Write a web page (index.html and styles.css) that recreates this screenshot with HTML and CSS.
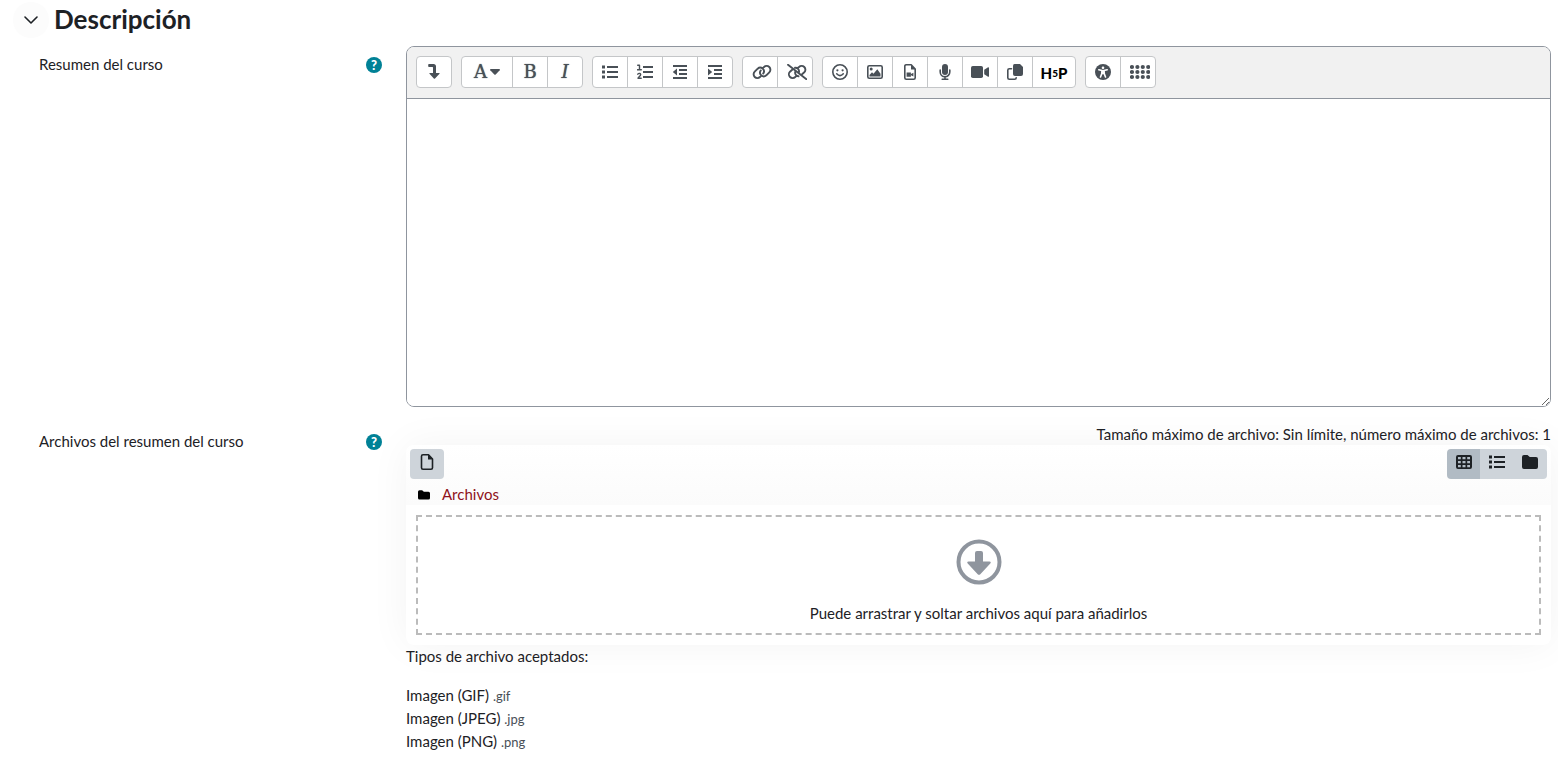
FILE: index.html
```html
<!DOCTYPE html>
<html lang="es">
<head>
<meta charset="utf-8">
<title>Descripción</title>
<link rel="stylesheet" href="styles.css">
</head>
<body>
<main class="section">
  <header class="section-head">
    <button class="toggle" type="button" aria-label="Contraer" aria-expanded="true">
      <svg class="icon chevron" viewBox="0 0 14 14"><path class="line" d="M1 4 7 10l6-6"/></svg>
    </button>
    <h3 class="title">Descripción</h3>
  </header>

  <div class="row">
    <div class="label-cell">
      <label for="summary">Resumen del curso</label>
      <button class="help" type="button" aria-label="Ayuda sobre Resumen del curso">?</button>
    </div>
    <div class="editor">
      <div class="toolbar" role="toolbar">
        <div class="group">
          <button class="tool" type="button" aria-label="Mostrar más botones"><svg class="icon" viewBox="0 0 16 16"><path d="M3 0h4.500Q10 0 10 2.500V9h3.200q.8.100.3.800L9 14.600q-.6.500-1.200 0L3.500 9.800Q3 9.100 3.800 9H7V3.500Q7 3 6.500 3H3q-.8 0-.8-.8V.8Q2.200 0 3 0z"/></svg></button>
        </div>
        <div class="group">
          <button class="tool wide" type="button" aria-label="Estilos de párrafo"><span class="glyph">A</span><svg class="caret" viewBox="0 0 10 6"><path d="M.8 0h8.400q1.200.2.500 1.200L5.700 5.500q-.7.700-1.400 0L.3 1.200Q-.4.200.8 0z"/></svg></button>
          <button class="tool" type="button" aria-label="Negrita"><span class="glyph">B</span></button>
          <button class="tool" type="button" aria-label="Cursiva"><span class="glyph slanted">I</span></button>
        </div>
        <div class="group">
          <button class="tool" type="button" aria-label="Lista desordenada"><svg class="icon" viewBox="0 0 16 16"><path d="M0 1.500h3v3H0zM0 6.500h3v3H0zM0 11.500h3v3H0zM5 2h11v2H5zM5 7h11v2H5zM5 12h11v2H5z"/></svg></button>
          <button class="tool" type="button" aria-label="Lista ordenada"><svg class="icon" viewBox="0 0 16 16"><path d="M6 2h10v2H6zM6 7h10v2H6zM6 12h10v2H6z"/><path class="line fine" d="M.7 1.300h1.800v4.200M.3 5.800h4M.8 10.200c1-1.400 3.200-.8 2.800.6C3.300 12 2 12.600 1 14.200h3.200"/></svg></button>
          <button class="tool" type="button" aria-label="Reducir sangría"><svg class="icon" viewBox="0 0 16 16"><path d="M1 1h14v2H1zM7 5h8v2H7zM7 9h8v2H7zM1 13h14v2H1zM5 4.500v7L.8 8z"/></svg></button>
          <button class="tool" type="button" aria-label="Aumentar sangría"><svg class="icon" viewBox="0 0 16 16"><path d="M1 1h14v2H1zM7 5h8v2H7zM7 9h8v2H7zM1 13h14v2H1zM1 4.500v7L5.200 8z"/></svg></button>
        </div>
        <div class="group">
          <button class="tool shifted" type="button" aria-label="Enlace"><svg class="icon large" viewBox="0 0 20 16"><path class="line bold" d="M11.300 3.600 12 3a3.700 3.700 0 0 1 5.300 5.300l-3 3a3.700 3.700 0 0 1-5.500-4.900M8.700 12.400l-.7.600a3.700 3.700 0 0 1-5.300-5.300l3-3a3.700 3.700 0 0 1 5.500 4.900"/></svg></button>
          <button class="tool shifted" type="button" aria-label="Quitar enlace"><svg class="icon large" viewBox="0 0 20 16"><path class="line bold" d="M1 .8 19.500 15.300M6 5 3 7.700a3.700 3.700 0 0 0 5.300 5.300l.7-.6M8.300 7.500a3.700 3.700 0 0 0 3.200 4.800M8 3.700a3.700 3.700 0 0 1 4 4.300M11 3.800l1-.8a3.700 3.700 0 0 1 5.300 5.300L15.300 10"/></svg></button>
        </div>
        <div class="group">
          <button class="tool" type="button" aria-label="Emoticono"><svg class="icon" viewBox="0 0 16 16"><circle class="line" cx="8" cy="8" r="7.200"/><circle cx="5.400" cy="6.300" r="1.100"/><circle cx="10.600" cy="6.300" r="1.100"/><path class="line" d="M4.700 9.800q3.300 3.600 6.600 0"/></svg></button>
          <button class="tool" type="button" aria-label="Imagen"><svg class="icon" viewBox="0 0 16 16"><rect class="line" x=".8" y="1.800" width="14.400" height="12.400" rx="1.500"/><circle cx="4.200" cy="5" r="1.500"/><path d="M2.500 12.500V11L5 8.300l1.500 1.500 3.800-4.600 3.200 4.600v2.700z"/></svg></button>
          <button class="tool" type="button" aria-label="Archivo multimedia"><svg class="icon" viewBox="0 0 16 16"><path class="line" d="M3.800.8h5.400L13.200 5v8.700q0 1.500-1.500 1.500H4.300q-1.500 0-1.500-1.500V2.300Q2.800.8 4.300.8"/><path d="M9 .8V5.500h4.500zM4.600 8.500h4.300v4.200H4.600zM9 10l2.400-1.300v3.800L9 11.300z"/></svg></button>
          <button class="tool" type="button" aria-label="Grabar audio"><svg class="icon" viewBox="0 0 16 16"><rect x="5" y="0" width="6" height="11" rx="3"/><path class="line" d="M3.200 6v2a4.800 4.800 0 0 0 9.600 0V6M8 12.500v2.700M5.200 15.200h5.600"/></svg></button>
          <button class="tool" type="button" aria-label="Grabar vídeo"><svg class="icon video" viewBox="0 0 18 16"><rect x="0" y="2" width="12" height="12" rx="1.800"/><path d="m13.200 5.700 3.500-2.300q1.300-.6 1.300.7v7.800q0 1.300-1.300.7l-3.500-2.300z"/></svg></button>
          <button class="tool" type="button" aria-label="Gestionar archivos"><svg class="icon" viewBox="0 0 16 16"><path d="M7.500 0H13l3 3v7q0 2-2 2H8q-2 0-2-2V2q0-2 1.500-2z"/><path class="line" d="M4.500 4.800H2.300Q.8 4.800.8 6.300v7.400q0 1.500 1.500 1.500h5.400q1.500 0 1.500-1.500"/></svg></button>
          <button class="tool h5p" type="button" aria-label="H5P"><span>H</span><span class="five">5</span><span>P</span></button>
        </div>
        <div class="group">
          <button class="tool" type="button" aria-label="Accesibilidad"><svg class="icon" viewBox="0 0 16 16"><circle cx="8" cy="8" r="8"/><circle class="white" cx="8" cy="3.800" r="1.300"/><path class="white-line" d="m3.800 5.800 4.200 1 4.200-1M8 7v2.500M6.800 7v2.500L5.500 13M9.200 7v2.500l1.300 3.500"/></svg></button>
          <button class="tool shifted" type="button" aria-label="Lector de pantalla"><svg class="icon large" viewBox="0 0 20 16"><path class="dots" d="M2 3h16.500M2 8h16.500M2 13h16.500"/></svg></button>
        </div>
      </div>
      <textarea id="summary" class="text"></textarea>
    </div>
  </div>

  <div class="row files-row">
    <div class="label-cell">
      <label for="add-file">Archivos del resumen del curso</label>
      <button class="help" type="button" aria-label="Ayuda sobre Archivos del resumen del curso">?</button>
    </div>
    <div class="files">
      <p class="limits">Tamaño máximo de archivo: Sin límite, número máximo de archivos: 1</p>
      <div class="manager">
        <div class="manager-head">
          <div class="manager-bar">
            <button id="add-file" class="view add" type="button" aria-label="Agregar"><svg class="icon" viewBox="0 0 16 16"><path class="line" d="M4 .8h5.500L13.500 5v8.700q0 1.500-1.500 1.500H4q-1.500 0-1.500-1.500V2.300Q2.500.8 4 .8z"/><path d="M9 .5V5.500h5z"/></svg></button>
            <div class="views">
              <button class="view active" type="button" aria-label="Iconos"><svg class="icon" viewBox="0 0 16 16"><path fill-rule="evenodd" d="M2 1h12q2 0 2 2v10q0 2-2 2H2q-2 0-2-2V3q0-2 2-2zM2 3v2.300h2.800V3zM6.500 3v2.300h3V3zM11.200 3v2.300H14V3zM2 7v2.300h2.800V7zM6.500 7v2.300h3V7zM11.200 7v2.300H14V7zM2 11v2.300h2.800V11zM6.500 11v2.300h3V11zM11.200 11v2.300H14V11z"/></svg></button>
              <button class="view" type="button" aria-label="Lista"><svg class="icon" viewBox="0 0 16 16"><path d="M0 1.500h3v3H0zM0 6.500h3v3H0zM0 11.500h3v3H0zM5 2h11v2H5zM5 7h11v2H5zM5 12h11v2H5z"/></svg></button>
              <button class="view last" type="button" aria-label="Árbol"><svg class="icon" viewBox="0 0 16 16"><path d="M2 1h3.500l2.300 2H14q2 0 2 2v8q0 2-2 2H2q-2 0-2-2V3q0-2 2-2z"/></svg></button>
            </div>
          </div>
          <nav class="path">
            <svg class="folder" viewBox="0 0 16 16"><path d="M2 1.500h3.500l2.300 2H14q2 0 2 2V12q0 2-2 2H2q-2 0-2-2V3.500q0-2 2-2z"/></svg>
            <a class="crumb" href="#">Archivos</a>
          </nav>
        </div>
        <div class="drop">
          <svg class="arrow" viewBox="0 0 46 46"><circle cx="23" cy="23" r="20.500"/><path d="M19 14q0-2 2-2h4q2 0 2 2v8.500h6.500q2 .3.800 1.900L24.300 35.200q-1.300 1.100-2.600 0L11.700 24.400q-1.200-1.600.8-1.900H19z"/></svg>
          <p class="drop-text">Puede arrastrar y soltar archivos aquí para añadirlos</p>
        </div>
      </div>
      <p class="types-title">Tipos de archivo aceptados:</p>
      <ul class="types">
        <li>Imagen (GIF) <small>.gif</small></li>
        <li>Imagen (JPEG) <small>.jpg</small></li>
        <li>Imagen (PNG) <small>.png</small></li>
      </ul>
    </div>
  </div>
</main>
</body>
</html>
```
FILE: styles.css
```css
* { box-sizing: border-box; }
body {
  margin: 0;
  background: #fff;
  color: #1d2125;
  font: 15px/23px Lato, sans-serif;
}
button { font: inherit; color: inherit; border: 0; padding: 0; background: none; cursor: pointer; }
p, ul, h3 { margin: 0; padding: 0; }
.section { padding: 2px 7px 16px 13px; overflow: hidden; }
.section-head { display: flex; align-items: center; gap: 5px; height: 36px; }
.toggle {
  display: flex; align-items: center; justify-content: center;
  width: 36px; height: 36px; border-radius: 50%; background: #fcfcfc;
}
.title { font-size: 26px; line-height: 32px; font-weight: 700; padding-bottom: 2px; }
.row { display: grid; grid-template-columns: 344px minmax(0, 1fr); column-gap: 23px; padding: 8px 0 0 26px; }
.files-row { padding-top: 16px; }
.label-cell { display: flex; justify-content: space-between; align-items: center; height: 23px; margin-top: 7px; }
.help {
  display: flex; align-items: center; justify-content: center;
  width: 16px; height: 16px; margin-right: 1px; border-radius: 50%;
  background: #008196; color: #fff; font-size: 13px; line-height: 16px; font-weight: 900;
}
.icon { display: block; width: 16px; height: 16px; fill: currentColor; }
.chevron { width: 14px; height: 14px; }
.large { width: 20px; }
.video { width: 18px; }
.line { fill: none; stroke: currentColor; stroke-width: 1.6; stroke-linecap: round; stroke-linejoin: round; }
.bold { stroke-width: 1.9; }
.fine { stroke-width: 1.4; }
.white { fill: #fff; }
.white-line { fill: none; stroke: #fff; stroke-width: 1.6; stroke-linecap: round; }
.dots { fill: none; stroke: currentColor; stroke-width: 4.200; stroke-linecap: round; stroke-dasharray: 0 5.4; }

.editor { border: 1px solid #8f959e; border-radius: 8px; overflow: hidden; }
.toolbar {
  display: flex; flex-wrap: wrap; gap: 9px; padding: 9px 9px 10px;
  background: #f1f1f1; border-bottom: 1px solid #8f959e; color: #495057;
}
.group { display: flex; border: 1px solid #c4c6c8; border-radius: 4px; background: #fff; }
.tool { display: flex; align-items: center; justify-content: center; width: 34px; height: 30px; }
.tool + .tool { width: 35px; border-left: 1px solid #c4c6c8; }
.tool.shifted { padding-left: 4px; }
.wide { width: 50px; gap: 3px; }
.glyph { font: 18px/20px "DejaVu Serif", serif; text-shadow: 0 0 1px currentColor; }
.slanted { font-style: italic; }
.caret { width: 10px; height: 6px; fill: currentColor; }
.tool.h5p { width: 43px; color: #000; font-size: 15px; font-weight: 900; padding-top: 3px; }
.five { font-size: 10px; }
.text {
  display: block; width: 100%; height: 307px; padding: 8px; border: 0; outline: 0;
  resize: vertical; font: inherit; color: inherit; background: #fff;
}

.limits { text-align: right; line-height: 22px; }
.manager { display: flow-root; border-radius: 8px; background: #fff; box-shadow: 0 0 40px rgba(0, 0, 0, 0.05); }
.manager-head {
  height: 60px; padding: 4px; border-radius: 8px 8px 0 0;
  background: linear-gradient(#fff, #fbfbfb);
}
.manager-bar { display: flex; justify-content: space-between; height: 30px; }
.view { display: flex; justify-content: center; padding-top: 5px; width: 33px; height: 30px; background: #ced4da; }
.add { width: 34px; border-radius: 4px; }
.last { width: 34px; }
.views { display: flex; border-radius: 4px; overflow: hidden; }
.active { background: #b1bbc4; }
.path { display: flex; align-items: center; gap: 12px; padding: 4px 0 0 8px; }
.folder { width: 12px; height: 12px; fill: #000; }
.crumb { color: #8f1220; text-decoration: none; }
.drop {
  display: flex; flex-direction: column; align-items: center; gap: 17px;
  height: 120px; margin: 10px; padding-top: 22px; border: 2px dashed #bbb;
}
.arrow { width: 46px; height: 46px; fill: #8f959e; }
.arrow circle { fill: none; stroke: #8f959e; stroke-width: 4; }
.types-title { margin-bottom: 16px; }
.types { list-style: none; }
.types small { font-size: 13px; line-height: 16px; color: #495057; }
```
